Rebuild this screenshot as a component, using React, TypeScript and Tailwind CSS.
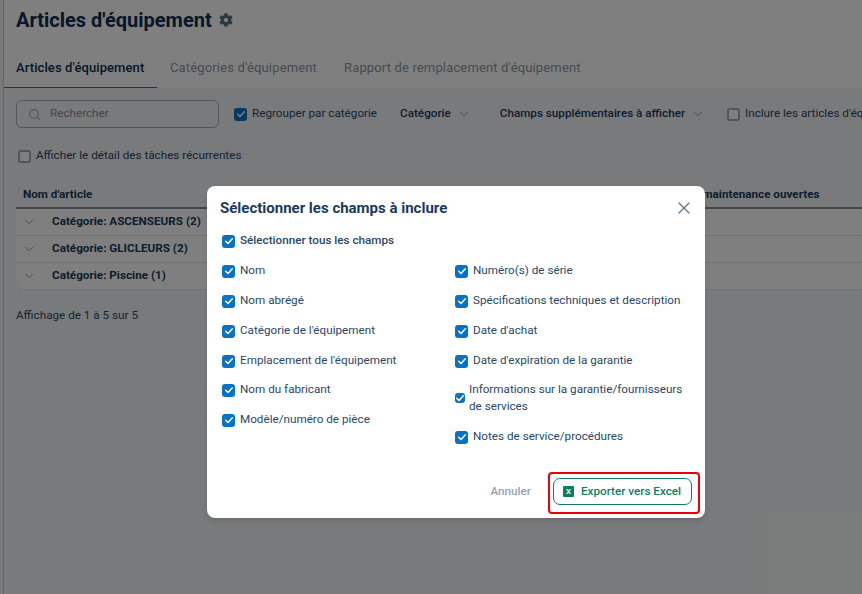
import React from "react";
import { Search, ChevronDown, X } from "lucide-react";
import { FaCog } from "react-icons/fa";

function Box({ checked, size = "w-[13px] h-[13px]" }: { checked?: boolean; size?: string }) {
  return checked ? (
    <span className={`${size} shrink-0 rounded-[3px] bg-[#0a72c4] flex items-center justify-center`}>
      <svg viewBox="0 0 12 12" className="w-[10px] h-[10px]" fill="none" stroke="white" strokeWidth="1.7" strokeLinecap="round" strokeLinejoin="round">
        <path d="M2 6.4 4.8 9 10 3.2" />
      </svg>
    </span>
  ) : (
    <span className={`${size} block shrink-0 rounded-[3px] border-2 border-[#a3acb5] bg-white`} />
  );
}

function Field({ label, className = "" }: { label: string; className?: string }) {
  return (
    <div className={`flex items-center gap-[5px] h-[30px] text-[11.7px] text-[#2b4763] ${className}`}>
      <span className="ml-[3px] shrink-0"><Box checked /></span>
      <span className="whitespace-nowrap">{label}</span>
    </div>
  );
}

function Row({ label, last }: { label: string; last?: boolean }) {
  return (
    <div className={`flex items-center ${last ? "h-[26px]" : "h-[27px] border-b border-[#dfe2e5]"}`}>
      <ChevronDown className="ml-[6px] w-[14px] h-[14px] shrink-0 text-[#7a8a99]" strokeWidth={1.5} />
      <span className="ml-[16px] text-[11.7px] font-bold text-[#1a3a5c] whitespace-nowrap">{label}</span>
    </div>
  );
}

export default function App() {
  return (
    <div className="relative w-[862px] h-[594px] overflow-hidden bg-[#f3f5f6] font-['Roboto',sans-serif]">
      <div className="h-full ml-[3px] border-l border-[#d0d0d0] flex flex-col">
        <div className="bg-white h-[88px] shrink-0 flex flex-col">
          <div className="flex items-center pl-[12px] h-[40px]">
            <h1 className="text-[20px] font-bold text-[#0d2e52] leading-[26px] whitespace-nowrap">Articles d'équipement</h1>
            <FaCog className="ml-[7px] w-[14px] h-[14px] text-[#5b6f82]" />
          </div>
          <div className="flex mt-auto text-[13px] h-[40px] tracking-[0.15px]">
            <div className="w-[153px] pl-[12px] border-b border-[#1b78c4] flex items-center font-medium text-[#0d2e52] whitespace-nowrap tracking-[0.1px]">Articles d'équipement</div>
            <div className="ml-[13px] flex items-center text-[#8b97a3] whitespace-nowrap">Catégories d'équipement</div>
            <div className="ml-[27px] flex items-center text-[#8b97a3] whitespace-nowrap">Rapport de remplacement d'équipement</div>
          </div>
        </div>
        <div className="flex items-center h-[28px] mt-[12px] pl-[12px] text-[11.7px] whitespace-nowrap">
          <div className="w-[203px] h-[28px] shrink-0 rounded-[6px] border border-[#a3acb5] bg-[#f3f5f6] flex items-center pl-[11px] text-[#7f8c99]">
            <Search className="w-[13px] h-[13px] text-[#9aa5af]" strokeWidth={2} />
            <span className="ml-[9px]">Rechercher</span>
          </div>
          <span className="ml-[15px] shrink-0"><Box checked /></span>
          <span className="ml-[5px] shrink-0 text-[#2b4763]">Regrouper par catégorie</span>
          <span className="ml-[23px] shrink-0 font-medium text-[#1a3a5c]">Catégorie</span>
          <ChevronDown className="ml-[6px] w-[14px] h-[14px] shrink-0 text-[#7a8a99]" strokeWidth={1.5} />
          <span className="ml-[29px] shrink-0 font-medium text-[#1a3a5c]">Champs supplémentaires à afficher</span>
          <ChevronDown className="ml-[6px] w-[14px] h-[14px] shrink-0 text-[#7a8a99]" strokeWidth={1.5} />
          <span className="ml-[22px] shrink-0"><Box /></span>
          <span className="ml-[5px] shrink-0 text-[#2b4763]">Inclure les articles d'équipement</span>
        </div>
        <div className="flex items-center gap-[5px] mt-[21px] ml-[14px] text-[11.7px] text-[#2b4763] h-[14px]">
          <Box />
          <span className="whitespace-nowrap">Afficher le détail des tâches récurrentes</span>
        </div>
        <div className="mt-[19px] ml-[12px] w-[900px] shrink-0 rounded-[6px] bg-white border-b border-[#dfe2e5]">
          <div className="h-[27px] flex items-center bg-[#f3f5f6] border-b-2 border-[#7f8c99] rounded-t-[6px] text-[11.7px] font-bold text-[#1a3a5c] whitespace-nowrap">
            <span className="ml-[7px]">Nom d'article</span>
            <span className="ml-[610px]">maintenance ouvertes</span>
          </div>
          <Row label="Catégorie: ASCENSEURS (2)" />
          <Row label="Catégorie: GLICLEURS (2)" />
          <Row label="Catégorie: Piscine (1)" last />
        </div>
        <div className="mt-[17px] ml-[12px] text-[11.7px] text-[#2b4763]">Affichage de 1 à 5 sur 5</div>
      </div>

      <div className="absolute inset-0 bg-black/50" />

      <div className="absolute left-[207px] top-[186px] w-[498px] h-[332px] bg-white rounded-[8px] shadow-md flex flex-col">
        <div className="flex items-center justify-between h-[44px] pl-[13px] pr-[11px]">
          <span className="text-[15px] font-bold text-[#1a3a5c] whitespace-nowrap">Sélectionner les champs à inclure</span>
          <X className="w-[20px] h-[20px] text-[#5f7488]" strokeWidth={1.5} />
        </div>
        <Field label="Sélectionner tous les champs" className="ml-[12px] -mt-[4px] font-medium" />
        <div className="flex ml-[12px]">
          <div className="w-[233px] shrink-0">
            <Field label="Nom" />
            <Field label="Nom abrégé" />
            <Field label="Catégorie de l'équipement" />
            <Field label="Emplacement de l'équipement" />
            <Field label="Nom du fabricant" className="-mt-[1px]" />
            <Field label="Modèle/numéro de pièce" />
          </div>
          <div className="flex-1">
            <Field label="Numéro(s) de série" />
            <Field label="Spécifications techniques et description" />
            <Field label="Date d'achat" />
            <Field label="Date d'expiration de la garantie" />
            <div className="flex items-center h-[44px] text-[11.7px] leading-[17px] text-[#2b4763]">
              <span className="ml-[3px] mr-[4px] shrink-0"><Box checked size="w-[10px] h-[10px]" /></span>
              <span className="w-[220px]">Informations sur la garantie/fournisseurs de services</span>
            </div>
            <Field label="Notes de service/procédures" className="mt-[2px]" />
          </div>
        </div>
        <div className="mt-auto mb-[4px] flex items-center justify-end pr-[5px]">
          <span className="text-[11.7px] font-medium text-[#98a2ad] mr-[17px] -mt-[3px]">Annuler</span>
          <div className="border-2 border-[#e8000b] rounded-[4px] pt-[4px] pb-[7px] pl-[3px] pr-[6px]">
            <div className="w-[139px] h-[27px] rounded-[7px] border border-[#0f7d5a] flex items-center pl-[9px] gap-[7px] text-[11.7px] font-medium text-[#0f7d5a] whitespace-nowrap">
              <span className="w-[11px] h-[11px] bg-[#0f7d5a] rounded-[1px] flex items-center justify-center text-[8px] leading-none text-white">X</span>
              Exporter vers Excel
            </div>
          </div>
        </div>
      </div>
    </div>
  );
}
